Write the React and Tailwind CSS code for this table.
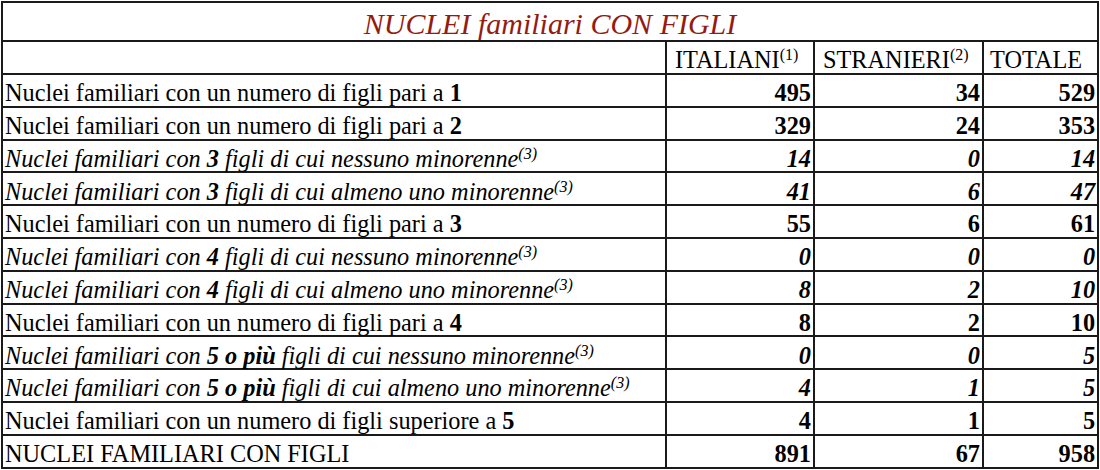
import React from "react";

const S = ({ children }) => <sup className="text-[16px]">{children}</sup>;

const rows = [
  { it: false, label: <>Nuclei familiari con un numero di figli pari a <b>1</b></>, v: ["495", "34", "529"] },
  { it: false, label: <>Nuclei familiari con un numero di figli pari a <b>2</b></>, v: ["329", "24", "353"] },
  { it: true, label: <>Nuclei familiari con <b>3</b> figli di cui nessuno minorenne<S>(3)</S></>, v: ["14", "0", "14"] },
  { it: true, label: <>Nuclei familiari con <b>3</b> figli di cui almeno uno minorenne<S>(3)</S></>, v: ["41", "6", "47"] },
  { it: false, label: <>Nuclei familiari con un numero di figli pari a <b>3</b></>, v: ["55", "6", "61"] },
  { it: true, label: <>Nuclei familiari con <b>4</b> figli di cui nessuno minorenne<S>(3)</S></>, v: ["0", "0", "0"] },
  { it: true, label: <>Nuclei familiari con <b>4</b> figli di cui almeno uno minorenne<S>(3)</S></>, v: ["8", "2", "10"] },
  { it: false, label: <>Nuclei familiari con un numero di figli pari a <b>4</b></>, v: ["8", "2", "10"] },
  { it: true, label: <>Nuclei familiari con <b>5 o più</b> figli di cui nessuno minorenne<S>(3)</S></>, v: ["0", "0", "5"] },
  { it: true, label: <>Nuclei familiari con <b>5 o più</b> figli di cui almeno uno minorenne<S>(3)</S></>, v: ["4", "1", "5"] },
  { it: false, label: <>Nuclei familiari con un numero di figli superiore a <b>5</b></>, v: ["4", "1", "5"] },
  { it: false, label: <>NUCLEI FAMILIARI CON FIGLI</>, v: ["891", "67", "958"] },
];

export default function App() {
  return (
    <div className="w-[1100px] h-[470px] bg-white pl-[1px] pt-[1px] overflow-hidden" style={{ fontFamily: '"Liberation Serif", "Times New Roman", serif' }}>
      <table className="table-fixed border-collapse border-2 border-[#1a1a1a] text-[24.3px] leading-none text-black w-[1096px]">
        <colgroup>
          <col className="w-[664px]" />
          <col className="w-[148px]" />
          <col className="w-[169px]" />
          <col className="w-[115px]" />
        </colgroup>
        <tbody>
          <tr className="h-[39px]">
            <td colSpan={4} className="border-2 border-[#1a1a1a] text-center italic text-[30px] text-[#951b12] pt-[4px] pb-0">
              NUCLEI familiari CON FIGLI
            </td>
          </tr>
          <tr className="h-[33px]">
            <td className="border-2 border-[#1a1a1a] p-0"></td>
            <td className="border-2 border-[#1a1a1a] px-[8px] pt-[6px] pb-0 whitespace-nowrap">ITALIANI<S>(1)</S></td>
            <td className="border-2 border-[#1a1a1a] px-[8px] pt-[6px] pb-0 whitespace-nowrap">STRANIERI<S>(2)</S></td>
            <td className="border-2 border-[#1a1a1a] px-[6px] pt-[6px] pb-0 whitespace-nowrap">TOTALE</td>
          </tr>
          {rows.map((r, i) => (
            <tr key={i} className={`h-[32.8px] ${r.it ? "italic" : ""}`}>
              <td className="border-2 border-[#1a1a1a] px-[2px] pt-[6px] pb-0 whitespace-nowrap">{r.label}</td>
              {r.v.map((n, j) => (
                <td key={j} className="border-2 border-[#1a1a1a] px-[2px] pt-[6px] pb-0 text-right font-bold">{n}</td>
              ))}
            </tr>
          ))}
        </tbody>
      </table>
    </div>
  );
}
